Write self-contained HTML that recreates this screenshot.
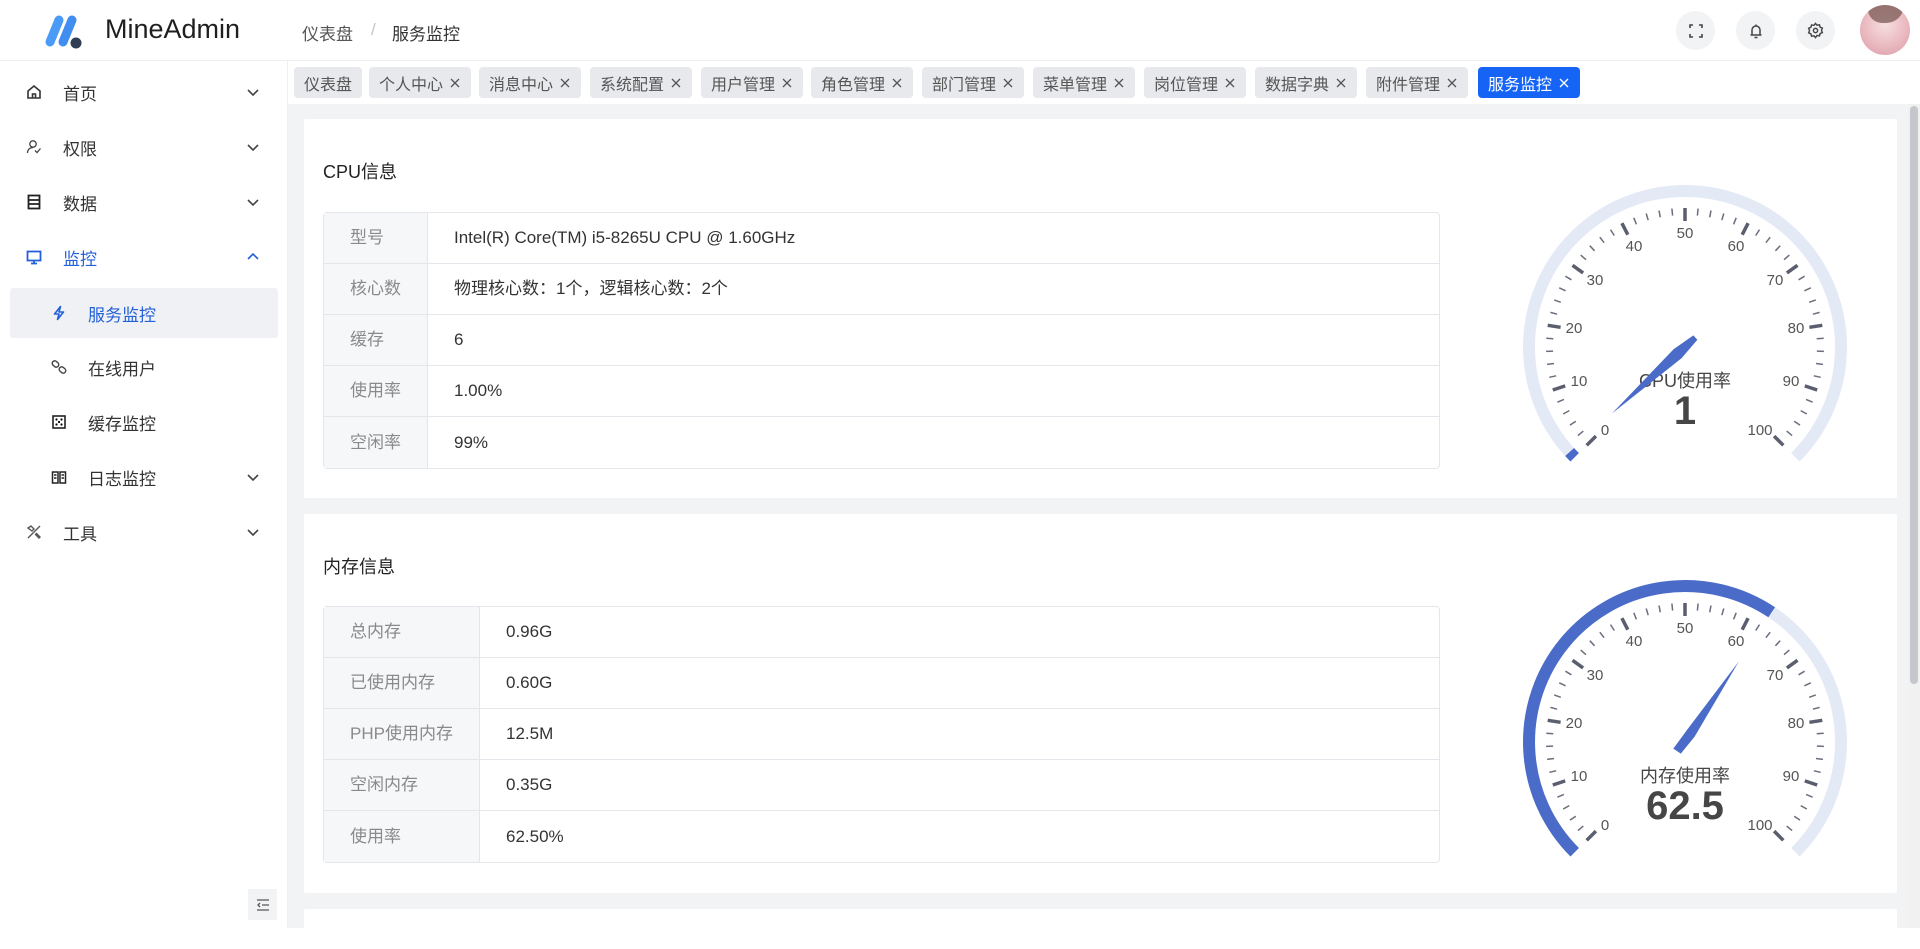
<!DOCTYPE html>
<html><head><meta charset="utf-8">
<style>
*{box-sizing:border-box;margin:0;padding:0}
body{width:1920px;height:928px;overflow:hidden;background:#fff;font-family:"Liberation Sans","Noto Sans CJK SC",sans-serif;color:#333;position:relative}
.abs{position:absolute}
.hdr{left:0;top:0;width:1920px;height:61px;border-bottom:1px solid #eceef1;background:#fff}
.brand{left:105px;top:14px;font-size:27px;color:#1f1f1f}
.bc{top:20px;font-size:17px}
.hbtn{top:11px;width:39px;height:39px;border-radius:50%;background:#f2f3f5;display:flex;align-items:center;justify-content:center}
.side{left:0;top:61px;width:288px;height:867px;background:#fff;border-right:1px solid #eef0f3}
.mi{position:absolute;left:0;width:288px;height:50px;display:flex;align-items:center;font-size:17px;color:#333}
.mi .ic{position:absolute;left:26px;top:17px;width:16px;height:16px}
.mi .tx{position:absolute;left:63px}
.mi.sub .ic{left:51px}
.mi.sub .tx{left:88px}
.mi .ch{position:absolute;left:247px;top:20px}
.tabs{left:288px;top:61px;width:1632px;height:43px;background:#fff}
.tab{position:absolute;top:6px;height:31px;background:#e8e9ed;border-radius:4px;font-size:16px;color:#555;display:flex;align-items:center;padding:0 10px;white-space:nowrap}
.tab svg{margin-left:6px}
.tab.on{background:#1664f5;color:#fff}
.main{left:288px;top:104px;width:1620px;height:824px;background:#f2f3f5}
.card{position:absolute;left:16px;width:1593px;background:#fff;border-radius:2px}
.ct{position:absolute;left:19px;font-size:18px;color:#222}
table{position:absolute;left:19px;width:1117px;border-collapse:separate;border-spacing:0;border:1px solid #e5e6eb;border-radius:4px;font-size:17px}
td{height:51px;border-bottom:1px solid #e5e6eb;padding:0 0 0 26px;vertical-align:middle;line-height:20px}
tr:last-child td{border-bottom:none}
td.l{background:#f6f7f9;color:#8a8a8a;border-right:1px solid #e5e6eb}
td.v{color:#333}
.sb{left:1908px;top:104px;width:12px;height:824px;background:#f1f1f1}
.thumb{left:1910px;top:106px;width:8px;height:578px;background:#c4c7cc;border-radius:4px}
.gauge{position:absolute;width:400px;height:400px}
.gauge text{font-family:"Liberation Sans","Noto Sans CJK SC",sans-serif}
</style></head><body>

<div class="abs hdr"></div>
<svg class="abs" style="left:44px;top:14px" width="42" height="36" viewBox="0 0 42 36">
<line x1="15" y1="6" x2="6" y2="28" stroke="#4a9bf5" stroke-width="9" stroke-linecap="round"/>
<line x1="28" y1="6" x2="19" y2="28" stroke="#3f8ef0" stroke-width="9" stroke-linecap="round"/>
<circle cx="32" cy="29" r="5.5" fill="#2f3e52"/>
</svg>
<div class="abs brand">MineAdmin</div>
<div class="abs bc" style="left:302px;color:#555">仪表盘</div>
<div class="abs bc" style="left:371px;color:#c0c4cc">/</div>
<div class="abs bc" style="left:392px;color:#333">服务监控</div>

<div class="abs hbtn" style="left:1676px"><svg width="16" height="16" viewBox="0 0 16 16" fill="none" stroke="#444" stroke-width="1.6"><path d="M2 5V2h3M11 2h3v3M14 11v3h-3M5 14H2v-3"/></svg></div>
<div class="abs hbtn" style="left:1736px"><svg width="16" height="16" viewBox="0 0 16 16" fill="none" stroke="#444" stroke-width="1.5"><path d="M4 12V7a4 4 0 0 1 8 0v5M2.5 12h11M6.5 14.5h3M8 1.5v1.5"/></svg></div>
<div class="abs hbtn" style="left:1796px"><svg width="17" height="17" viewBox="0 0 24 24" fill="none" stroke="#444" stroke-width="2"><circle cx="12" cy="12" r="3"/><path d="M12 2l2.2 2.6 3.4-.6.9 3.3 3.2 1.3-1.3 3.2 1.3 3.2-3.2 1.3-.9 3.3-3.4-.6L12 22l-2.2-2.6-3.4.6-.9-3.3-3.2-1.3L3.6 12 2.3 8.8l3.2-1.3.9-3.3 3.4.6z"/></svg></div>
<div class="abs" style="left:1860px;top:5px;width:50px;height:50px;border-radius:50%;background:radial-gradient(circle at 50% 40%,#f6dede 0,#eab9c0 55%,#d99aa6 100%);overflow:hidden"><div style="position:absolute;left:8px;top:0;width:36px;height:18px;background:#7a5a55;border-radius:0 0 18px 14px;opacity:.75"></div></div>

<div class="abs side">
 <div class="mi" style="top:6px"><svg class="ic" viewBox="0 0 16 16" fill="none" stroke="#333" stroke-width="1.6"><path d="M2 7l6-5 6 5v7H2z"/><path d="M6.5 14V10h3v4"/></svg><span class="tx">首页</span><svg class="ch" width="12" height="10" viewBox="0 0 12 10"><path d="M1 3l5 5 5-5" fill="none" stroke="#444" stroke-width="1.6"/></svg></div>
 <div class="mi" style="top:61px"><svg class="ic" viewBox="0 0 16 16" fill="none" stroke="#444" stroke-width="1.3"><circle cx="7" cy="5" r="3.2"/><path d="M1.5 14c0-3.5 2.5-5.5 5.5-5.5M9 11.5l2 2 3.5-4"/></svg><span class="tx">权限</span><svg class="ch" width="12" height="10" viewBox="0 0 12 10"><path d="M1 3l5 5 5-5" fill="none" stroke="#444" stroke-width="1.6"/></svg></div>
 <div class="mi" style="top:116px"><svg class="ic" viewBox="0 0 16 16" fill="none" stroke="#222" stroke-width="1.8"><rect x="2.5" y="1.5" width="11" height="13"/><path d="M2.5 6h11M2.5 10h11"/></svg><span class="tx">数据</span><svg class="ch" width="12" height="10" viewBox="0 0 12 10"><path d="M1 3l5 5 5-5" fill="none" stroke="#444" stroke-width="1.6"/></svg></div>
 <div class="mi" style="top:171px;color:#2460d8"><svg class="ic" viewBox="0 0 16 16" fill="none" stroke="#2460d8" stroke-width="1.8"><rect x="1.5" y="2.5" width="13" height="9"/><path d="M8 11.5v3M5 14.5h6"/></svg><span class="tx">监控</span><svg class="ch" width="12" height="10" viewBox="0 0 12 10"><path d="M1 7l5-5 5 5" fill="none" stroke="#2460d8" stroke-width="1.6"/></svg></div>
 <div class="abs" style="left:10px;top:227px;width:268px;height:50px;background:#f0f1f4;border-radius:3px"></div>
 <div class="mi sub" style="top:227px;color:#2460d8"><svg class="ic" viewBox="0 0 16 16" fill="none" stroke="#2460d8" stroke-width="1.6" stroke-linejoin="round"><path d="M9.5 1.5L3.5 9h4.5l-1.5 5.5L12.5 7H8z"/></svg><span class="tx">服务监控</span></div>
 <div class="mi sub" style="top:281px"><svg class="ic" viewBox="0 0 16 16" fill="none" stroke="#444" stroke-width="1.4"><rect x="1" y="2.5" width="7" height="5" rx="2.5" transform="rotate(40 4.5 5)"/><rect x="8" y="8.5" width="7" height="5" rx="2.5" transform="rotate(40 11.5 11)"/></svg><span class="tx">在线用户</span></div>
 <div class="mi sub" style="top:336px"><svg class="ic" viewBox="0 0 16 16"><rect x="2" y="2" width="12" height="12" fill="none" stroke="#222" stroke-width="1.6"/><circle cx="5.5" cy="5.5" r="1.1"/><circle cx="10.5" cy="5.5" r="1.1"/><circle cx="8" cy="8" r="1.1"/><circle cx="5.5" cy="10.5" r="1.1"/><circle cx="10.5" cy="10.5" r="1.1"/></svg><span class="tx">缓存监控</span></div>
 <div class="mi sub" style="top:391px"><svg class="ic" viewBox="0 0 16 16" fill="none" stroke="#222" stroke-width="1.5"><path d="M1.5 3h5.5v11H1.5zM9 3h5.5v11H9zM3 6h2.5M3 9h2.5M10.5 6h2.5M10.5 9h2.5"/></svg><span class="tx">日志监控</span><svg class="ch" width="12" height="10" viewBox="0 0 12 10"><path d="M1 3l5 5 5-5" fill="none" stroke="#444" stroke-width="1.6"/></svg></div>
 <div class="mi" style="top:446px"><svg class="ic" viewBox="0 0 16 16" fill="none" stroke="#555" stroke-width="1.4"><path d="M2 14L14 2M2 4l3-2 3 3-2 2zM10 9l4 4-1 1-4-4"/></svg><span class="tx">工具</span><svg class="ch" width="12" height="10" viewBox="0 0 12 10"><path d="M1 3l5 5 5-5" fill="none" stroke="#444" stroke-width="1.6"/></svg></div>
 <div class="abs" style="left:248px;top:828px;width:29px;height:31px;background:#f2f3f5;display:flex;align-items:center;justify-content:center"><svg width="14" height="12" viewBox="0 0 14 12" fill="none" stroke="#555" stroke-width="1.3"><path d="M1 1h12M6 6h7M1 11h12M4 4L2 6l2 2"/></svg></div>
</div>

<div class="abs tabs">
<div class="tab" style="left:6px">仪表盘</div>
<div class="tab" style="left:81px">个人中心<svg width="12" height="12" viewBox="0 0 12 12"><path d="M2 2l8 8M10 2l-8 8" stroke="#555" stroke-width="1.3"/></svg></div>
<div class="tab" style="left:191px">消息中心<svg width="12" height="12" viewBox="0 0 12 12"><path d="M2 2l8 8M10 2l-8 8" stroke="#555" stroke-width="1.3"/></svg></div>
<div class="tab" style="left:302px">系统配置<svg width="12" height="12" viewBox="0 0 12 12"><path d="M2 2l8 8M10 2l-8 8" stroke="#555" stroke-width="1.3"/></svg></div>
<div class="tab" style="left:413px">用户管理<svg width="12" height="12" viewBox="0 0 12 12"><path d="M2 2l8 8M10 2l-8 8" stroke="#555" stroke-width="1.3"/></svg></div>
<div class="tab" style="left:523px">角色管理<svg width="12" height="12" viewBox="0 0 12 12"><path d="M2 2l8 8M10 2l-8 8" stroke="#555" stroke-width="1.3"/></svg></div>
<div class="tab" style="left:634px">部门管理<svg width="12" height="12" viewBox="0 0 12 12"><path d="M2 2l8 8M10 2l-8 8" stroke="#555" stroke-width="1.3"/></svg></div>
<div class="tab" style="left:745px">菜单管理<svg width="12" height="12" viewBox="0 0 12 12"><path d="M2 2l8 8M10 2l-8 8" stroke="#555" stroke-width="1.3"/></svg></div>
<div class="tab" style="left:856px">岗位管理<svg width="12" height="12" viewBox="0 0 12 12"><path d="M2 2l8 8M10 2l-8 8" stroke="#555" stroke-width="1.3"/></svg></div>
<div class="tab" style="left:967px">数据字典<svg width="12" height="12" viewBox="0 0 12 12"><path d="M2 2l8 8M10 2l-8 8" stroke="#555" stroke-width="1.3"/></svg></div>
<div class="tab" style="left:1078px">附件管理<svg width="12" height="12" viewBox="0 0 12 12"><path d="M2 2l8 8M10 2l-8 8" stroke="#555" stroke-width="1.3"/></svg></div>
<div class="tab on" style="left:1190px">服务监控<svg width="12" height="12" viewBox="0 0 12 12"><path d="M2 2l8 8M10 2l-8 8" stroke="#fff" stroke-width="1.3"/></svg></div>
</div>

<div class="abs main">
 <div class="card" style="top:15px;height:379px">
  <div class="ct" style="top:39px">CPU信息</div>
  <table style="top:93px">
   <tr><td class="l" style="width:104px">型号</td><td class="v">Intel(R) Core(TM) i5-8265U CPU @ 1.60GHz</td></tr>
   <tr><td class="l">核心数</td><td class="v">物理核心数：1个，逻辑核心数：2个</td></tr>
   <tr><td class="l">缓存</td><td class="v">6</td></tr>
   <tr><td class="l">使用率</td><td class="v">1.00%</td></tr>
   <tr><td class="l">空闲率</td><td class="v">99%</td></tr>
  </table>
 </div>
 <div class="card" style="top:410px;height:379px">
  <div class="ct" style="top:39px">内存信息</div>
  <table style="top:92px">
   <tr><td class="l" style="width:156px">总内存</td><td class="v">0.96G</td></tr>
   <tr><td class="l">已使用内存</td><td class="v">0.60G</td></tr>
   <tr><td class="l">PHP使用内存</td><td class="v">12.5M</td></tr>
   <tr><td class="l">空闲内存</td><td class="v">0.35G</td></tr>
   <tr><td class="l">使用率</td><td class="v">62.50%</td></tr>
  </table>
 </div>
 <div class="card" style="top:805px;height:40px"></div>
</div>

<svg class="gauge" id="g1" style="left:1485px;top:147px" viewBox="-200 -200 400 400">
 <path d="M-110.3 110.3A156 156 0 1 1 110.3 110.3" fill="none" stroke="#e4e9f6" stroke-width="12"/>
 <path d="M-110.3 110.3A156 156 0 0 1 -115.4 105.0" fill="none" stroke="#4a6bc8" stroke-width="12"/>
 <g class="ticks"></g>
 <g font-size="15" fill="#555" text-anchor="middle" dominant-baseline="middle">
  <text x="-80" y="84">0</text><text x="-106" y="35">10</text><text x="-111" y="-18">20</text><text x="-90" y="-66">30</text><text x="-51" y="-100">40</text><text x="0" y="-113">50</text><text x="51" y="-100">60</text><text x="90" y="-66">70</text><text x="111" y="-18">80</text><text x="106" y="35">90</text><text x="75" y="84">100</text>
 </g>
 <text x="0" y="40" font-size="18" fill="#464646" text-anchor="middle">CPU使用率</text>
 <text x="0" y="77" font-size="40" font-weight="bold" fill="#464646" text-anchor="middle">1</text>
 <polygon points="99,0 10,-6 -14,-3 -14,3 10,6" fill="#4a6bc8" transform="rotate(-222.3)"/>
</svg>

<svg class="gauge" id="g2" style="left:1485px;top:542px" viewBox="-200 -200 400 400">
 <path d="M-110.3 110.3A156 156 0 1 1 110.3 110.3" fill="none" stroke="#e4e9f6" stroke-width="12"/>
 <path d="M-110.3 110.3A156 156 0 0 1 86.7 -129.7" fill="none" stroke="#4a6bc8" stroke-width="12"/>
 <g class="ticks"></g>
 <g font-size="15" fill="#555" text-anchor="middle" dominant-baseline="middle">
  <text x="-80" y="84">0</text><text x="-106" y="35">10</text><text x="-111" y="-18">20</text><text x="-90" y="-66">30</text><text x="-51" y="-100">40</text><text x="0" y="-113">50</text><text x="51" y="-100">60</text><text x="90" y="-66">70</text><text x="111" y="-18">80</text><text x="106" y="35">90</text><text x="75" y="84">100</text>
 </g>
 <text x="0" y="40" font-size="18" fill="#464646" text-anchor="middle">内存使用率</text>
 <text x="0" y="77" font-size="40" font-weight="bold" fill="#464646" text-anchor="middle">62.5</text>
 <polygon points="97,0 12,-5 -12,-6 -12,3 10,5" fill="#4a6bc8" transform="rotate(-56.25)"/>
</svg>

<div class="abs sb"></div>
<div class="abs thumb"></div>

<script>
document.querySelectorAll('.ticks').forEach(function(g){
 var s='';
 for(var i=0;i<=50;i++){
  var a=(225-5.4*i)*Math.PI/180,c=Math.cos(a),n=-Math.sin(a);
  var maj=i%5==0,r1=maj?126:132,r2=139;
  s+='<line x1="'+(c*r1).toFixed(1)+'" y1="'+(n*r1).toFixed(1)+'" x2="'+(c*r2).toFixed(1)+'" y2="'+(n*r2).toFixed(1)+'" stroke="'+(maj?'#5a5e6e':'#6a6e7c')+'" stroke-width="'+(maj?3.5:1.5)+'"/>';
 }
 g.innerHTML=s;
});
</script>
</body></html>
